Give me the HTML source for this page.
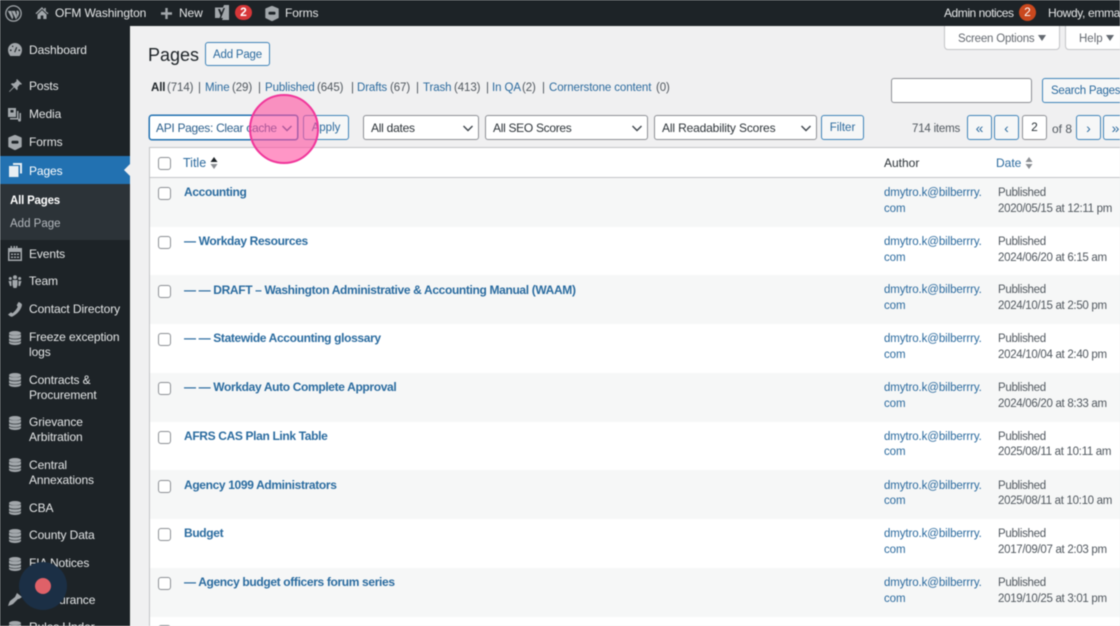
<!DOCTYPE html>
<html lang="en"><head><meta charset="utf-8"><title>Pages</title>
<style>
html,body{margin:0;padding:0;width:1120px;height:626px;overflow:hidden;background:#f0f0f1}
body{position:relative;font-family:"Liberation Sans",sans-serif;font-size:12px;color:#3c434a}
#w{position:absolute;left:0;top:0;width:1120px;height:626px;overflow:hidden;filter:blur(.4px)}
.a,.t,.b,svg.i{position:absolute}
.t{white-space:nowrap;line-height:16px}
.s{color:#e4e6e7;left:29px;letter-spacing:-.1px}
.tb{color:#e4e6e7;letter-spacing:-.12px}
.l{color:#2b6a9e}
.ti{color:#2a6b9f;font-weight:700;left:184px;letter-spacing:-.35px}
.g{color:#50575e}
.e{color:#2b6a9e;left:884px;font-size:11.5px;letter-spacing:-.1px;margin-top:1px}
.p{color:#50575e;left:998px;font-size:11.5px;letter-spacing:-.3px;margin-top:1px}
.v{top:80px;font-size:11.5px;letter-spacing:-.1px;color:#50575e}
.b{box-sizing:border-box;border:1px solid #3e83b8;border-radius:3px;background:#f6f7f7;color:#2b6a9e;text-align:center;white-space:nowrap;font-size:11.5px}
.sel{box-sizing:border-box;position:absolute;height:25px;top:115px;border:1px solid #8c8f94;border-radius:3px;background:#fff;color:#2c3338;line-height:24px;padding-left:7px;white-space:nowrap;letter-spacing:-.25px}
.ck{position:absolute;left:158px;width:13px;height:13px;box-sizing:border-box;border:1px solid #8c8f94;border-radius:3px;background:#fff}
.r{position:absolute;left:150px;width:970px;height:49px;background:#f6f7f7}
.pg{top:115px;width:25px;height:25px;line-height:24px;font-size:14px}
.tri{position:absolute;top:35px;width:0;height:0;border-left:4.5px solid transparent;border-right:4.5px solid transparent;border-top:6px solid #646970}
svg.i{fill:#a2a7ab}
</style></head><body><div id="w">
<svg width="0" height="0" style="position:absolute"><defs>
<g id="db"><ellipse cx="6" cy="2.200" rx="6" ry="2.200"/><path d="M0 3.400c1.500 1.500 10.500 1.500 12 0v2.800c-1 2-11 2-12 0zM0 7.200c1.500 1.500 10.500 1.500 12 0v2.400c-1 2-11 2-12 0zM0 10.500c1.500 1.500 10.500 1.500 12 0v1.500c-1 2.700-11 2.700-12 0z"/></g>
<g id="fm"><path d="M7 .5 13 3v8.500L7 14.500 1 11.500V3z" stroke="#a2a7ab" stroke-width="1.400" stroke-linejoin="round"/><rect x="3.500" y="5.800" width="7" height="2.800" rx="1" fill="#1d2327"/></g>
</defs></svg>

<div class="a" style="left:0;top:0;width:1120px;height:26px;background:#1d2327"></div>
<div class="a" style="left:0;top:26px;width:130px;height:600px;background:#1d2327"></div>

<!-- admin bar -->
<svg class="i" style="left:5px;top:5px" width="17" height="17" viewBox="0 0 16 16"><circle cx="8" cy="8" r="7.200" fill="none" stroke="#a2a7ab" stroke-width="1.200"/><path d="M2.600 5.500h3.200l2 6-.9 2.200zM6.100 5.500h3.300l2 6-1 2.200zM11 5.200c1.600-.3 2.600 1.600 2.100 3.400l-1.300 3.300-.9-2.800c.5-1 .4-2-.2-2.600z"/></svg>
<svg class="i" style="left:35px;top:6px" width="14" height="14" viewBox="0 0 14 14"><path d="M7 1 0.500 7.300l.9.9L7 3l5.600 5.200.9-.9L10.800 5.300V2H9.200v1.800zM2.500 8.500V13h3.200V9.500h2.600V13h3.200V8.500L7 4.300z"/></svg>
<span class="t tb" style="left:55px;top:5px">OFM Washington</span>
<svg class="i" style="left:161px;top:8px" width="11" height="11" viewBox="0 0 11 11"><path d="M4.300 0h2.400v4.300H11v2.400H6.700V11H4.300V6.700H0V4.300h4.300z"/></svg>
<span class="t tb" style="left:179px;top:5px">New</span>
<svg class="i" style="left:214px;top:4px" width="15" height="17" viewBox="0 0 15 17"><path d="M1 3.500h8l1-2.500H15v15H8l1-2H1z" fill="#a2a7ab"/><path d="M4 5h2l1.500 3.500L9.500 4 11 4 7 14H5.500l1-2.500z" fill="#1d2327"/></svg>
<span class="a" style="left:235px;top:5px;width:17px;height:15px;border-radius:8px;background:#d63638;color:#fff;text-align:center;line-height:15px;font-size:12px;font-weight:700">2</span>
<svg class="i" style="left:265px;top:6px" width="14" height="15" viewBox="0 0 14 15"><use href="#fm"/></svg>
<span class="t tb" style="left:285px;top:5px">Forms</span>
<span class="t tb" style="left:944px;top:5px;letter-spacing:-.45px">Admin notices</span>
<span class="a" style="left:1019px;top:4px;width:17px;height:17px;border-radius:50%;background:#c9481e;color:#fff;text-align:center;line-height:16px;font-size:12px">2</span>
<span class="t tb" style="left:1048px;top:5px;letter-spacing:-.35px">Howdy, emma</span>

<!-- sidebar -->
<div class="a" style="left:0;top:156px;width:130px;height:28px;background:#2271b1"></div>
<div class="a" style="left:124px;top:164px;border:6px solid transparent;border-right-color:#f0f0f1;border-left:0"></div>
<div class="a" style="left:0;top:184px;width:130px;height:56px;background:#2c3338"></div>

<svg class="i" style="left:8px;top:43px" width="14" height="13" viewBox="0 0 14 13"><path d="M7 0a7 7 0 0 0-7 7c0 2.300.9 4.300 2.300 6h9.400C13.100 11.300 14 9.300 14 7a7 7 0 0 0-7-7zM6.200 9l2-5 1 .4-2 5zM2 6.500h1.500V8H2zM10.500 6.500H12V8h-1.500zM4 2.700h1.300V4H4z" fill-rule="evenodd"/></svg>
<span class="t s" style="top:42px">Dashboard</span>
<svg class="i" style="left:8px;top:79px" width="14" height="14" viewBox="0 0 14 14"><path d="M9 0l5 5-1.200.8-.8-.5L9.500 8.200c.5 1.300.2 2.300-.5 3L6.200 8.400 1.500 13l-.5-.5 4.600-4.700L2.800 5c.7-.7 1.700-1 3-.5L8.700 2l-.5-.8z"/></svg>
<span class="t s" style="top:78px">Posts</span>
<svg class="i" style="left:7px;top:107px" width="15" height="15" viewBox="0 0 15 15"><path d="M1 1h8v9H1zM3.500 3v2.500H6.500V3z" fill-rule="evenodd"/><path d="M3 11h7V4h1.500v8.500H3zM12.500 6H14v7a1.500 1.500 0 1 1-1.500-1.400z"/></svg>
<span class="t s" style="top:106px">Media</span>
<svg class="i" style="left:8px;top:135px" width="14" height="15" viewBox="0 0 14 15"><use href="#fm"/></svg>
<span class="t s" style="top:134px">Forms</span>
<svg class="i" style="left:9px;top:163px;fill:#e8eef3" width="13" height="14" viewBox="0 0 13 14"><path d="M4 0h9v10.500h-2V2H4zM0 3h9.500v11H0z"/></svg>
<span class="t" style="left:29px;top:163px;color:#fff;letter-spacing:-.1px">Pages</span>
<span class="t" style="left:10px;top:193px;color:#fff;font-weight:700;font-size:11.5px;letter-spacing:-.2px">All Pages</span>
<span class="t" style="left:10px;top:216px;color:#b4b9be;font-size:11.5px">Add Page</span>

<svg class="i" style="left:8px;top:246px" width="14" height="15" viewBox="0 0 14 15"><path d="M0 2h2.500V0h1.500v2h1.500V0h1.500v2h1V0h1.500v2H14v13H0zM1.500 6v7.500h11V6zM3 7.500h2v1.500H3zm3 0h2v1.500H6zm3 0h2v1.500H9zM3 10.500h2V12H3zm3 0h2V12H6zm3 0h2V12H9z" fill-rule="evenodd"/></svg>
<span class="t s" style="top:246px">Events</span>
<svg class="i" style="left:8px;top:275px" width="14" height="13" viewBox="0 0 14 13"><circle cx="7" cy="2.200" r="2"/><circle cx="2.300" cy="3.500" r="1.500"/><circle cx="11.700" cy="3.500" r="1.500"/><path d="M4.500 5h5v5l-1 3h-3l-1-3zM.5 6h3v5H2zM10.500 6h3L12 11h-1.500z"/></svg>
<span class="t s" style="top:273px">Team</span>
<svg class="i" style="left:7px;top:302px" width="16" height="15" viewBox="0 0 16 15"><path d="M11.500 0c1.500.3 3 1.500 3.500 2.500C14.800 7 10 12.500 5 14.800c-1.300 0-2.800-1-4-2.300l3-2.300 1.400 1c2-1.300 4.200-4 5.300-6.500l-1-1.400z"/></svg>
<span class="t s" style="top:301px">Contact Directory</span>

<svg class="i" style="left:9px;top:331px" width="12" height="14" viewBox="0 0 12 14"><use href="#db"/></svg>
<span class="t s" style="top:329px">Freeze exception</span><span class="t s" style="top:344px">logs</span>
<svg class="i" style="left:9px;top:373px" width="12" height="14" viewBox="0 0 12 14"><use href="#db"/></svg>
<span class="t s" style="top:372px">Contracts &amp;</span><span class="t s" style="top:387px">Procurement</span>
<svg class="i" style="left:9px;top:416px" width="12" height="14" viewBox="0 0 12 14"><use href="#db"/></svg>
<span class="t s" style="top:414px">Grievance</span><span class="t s" style="top:429px">Arbitration</span>
<svg class="i" style="left:9px;top:458px" width="12" height="14" viewBox="0 0 12 14"><use href="#db"/></svg>
<span class="t s" style="top:457px">Central</span><span class="t s" style="top:472px">Annexations</span>
<svg class="i" style="left:9px;top:501px" width="12" height="14" viewBox="0 0 12 14"><use href="#db"/></svg>
<span class="t s" style="top:500px">CBA</span>
<svg class="i" style="left:9px;top:529px" width="12" height="14" viewBox="0 0 12 14"><use href="#db"/></svg>
<span class="t s" style="top:527px">County Data</span>
<svg class="i" style="left:9px;top:557px" width="12" height="14" viewBox="0 0 12 14"><use href="#db"/></svg>
<span class="t s" style="top:555px">FIA Notices</span>
<svg class="i" style="left:7px;top:593px" width="15" height="13" viewBox="0 0 15 13"><path d="M10 0l5 4-3 2-1 0-5 5-2 1-3 1 1-3 1-2 5-4z"/></svg>
<span class="t s" style="top:592px">Reinsurance</span>
<svg class="i" style="left:9px;top:621px" width="12" height="14" viewBox="0 0 12 14"><use href="#db"/></svg>
<span class="t s" style="top:619px">Rules Under</span>
<div class="a" style="left:19px;top:562px;width:48px;height:48px;border-radius:50%;background:#1b2f45"></div>
<div class="a" style="left:35px;top:578px;width:16px;height:16px;border-radius:50%;background:#df6168"></div>

<!-- header -->
<span class="t" style="left:148px;top:43px;font-size:18px;line-height:24px;color:#1d2327">Pages</span>
<div class="b" style="left:205px;top:42px;width:65px;height:24px;line-height:24px;letter-spacing:-.2px">Add Page</div>
<div class="a" style="left:944px;top:26px;width:116px;height:24px;box-sizing:border-box;background:#fff;border:1px solid #c3c4c7;border-top:0;border-radius:0 0 4px 4px"></div>
<span class="t" style="left:958px;top:31px;color:#646970;font-size:11.5px;letter-spacing:-.2px">Screen Options</span>
<div class="tri" style="left:1038px"></div>
<div class="a" style="left:1065px;top:26px;width:60px;height:24px;box-sizing:border-box;background:#fff;border:1px solid #c3c4c7;border-top:0;border-radius:0 0 4px 4px"></div>
<span class="t" style="left:1079px;top:31px;color:#646970;font-size:11.5px">Help</span>
<div class="tri" style="left:1106px"></div>

<b class="t v" style="left:151px;color:#1d2327">All</b><span class="t v" style="left:167px">(714)</span><span class="t v" style="left:198px">|</span>
<span class="t v" style="left:205px;color:#2b6a9e">Mine</span><span class="t v" style="left:232px">(29)</span><span class="t v" style="left:258px">|</span>
<span class="t v" style="left:265px;color:#2b6a9e">Published</span><span class="t v" style="left:317px">(645)</span><span class="t v" style="left:351px">|</span>
<span class="t v" style="left:357px;color:#2b6a9e">Drafts</span><span class="t v" style="left:390px">(67)</span><span class="t v" style="left:416px">|</span>
<span class="t v" style="left:423px;color:#2b6a9e">Trash</span><span class="t v" style="left:454px">(413)</span><span class="t v" style="left:486px">|</span>
<span class="t v" style="left:492px;color:#2b6a9e">In QA</span><span class="t v" style="left:522px">(2)</span><span class="t v" style="left:542px">|</span>
<span class="t v" style="left:549px;color:#2b6a9e">Cornerstone content</span><span class="t v" style="left:656px">(0)</span>

<div class="a" style="left:891px;top:78px;width:141px;height:25px;box-sizing:border-box;background:#fff;border:1px solid #8c8f94;border-radius:3px"></div>
<div class="b" style="left:1042px;top:78px;width:90px;height:25px;line-height:25px;text-align:left;padding-left:8px;letter-spacing:-.25px">Search Pages</div>

<!-- filters -->
<div class="sel" style="left:149px;width:149px;border-color:#2271b1;box-shadow:0 0 0 .5px #2271b1"></div>
<div class="b" style="left:303px;top:115px;width:46px;height:25px;line-height:25px">Apply</div>
<div class="sel" style="left:363px;width:116px">All dates</div>
<div class="sel" style="left:485px;width:163px;letter-spacing:-.3px">All SEO Scores</div>
<div class="sel" style="left:654px;width:163px;letter-spacing:-.15px">All Readability Scores</div>
<div class="b" style="left:821px;top:115px;width:43px;height:25px;line-height:25px">Filter</div>
<svg class="a" style="left:0;top:0" width="1120" height="150" fill="none" stroke="#3c434a" stroke-width="1.400"><path d="M463.500 126l4.500 4.500 4.500-4.500M632.500 126l4.500 4.500 4.500-4.500M801.500 126l4.500 4.500 4.500-4.500"/></svg>

<span class="t g" style="left:912px;top:121px;font-size:11.5px;letter-spacing:-.2px">714 items</span>
<div class="b pg" style="left:967px">«</div>
<div class="b pg" style="left:994px">‹</div>
<div class="a" style="left:1022px;top:115px;width:25px;height:25px;box-sizing:border-box;background:#fff;border:1px solid #8c8f94;border-radius:3px;text-align:center;line-height:23px;color:#2c3338">2</div>
<span class="t g" style="left:1052px;top:121px;font-size:12px">of 8</span>
<div class="b pg" style="left:1076px">›</div>
<div class="b pg" style="left:1103px">»</div>

<!-- table -->
<div class="a" style="left:149px;top:147px;width:980px;height:480px;background:#fff;border:1px solid #c3c4c7;box-sizing:border-box"></div>
<div class="a" style="left:150px;top:177px;width:970px;height:1px;background:#c3c4c7"></div>
<div class="r" style="top:178px"></div>
<div class="r" style="top:275px"></div>
<div class="r" style="top:373px"></div>
<div class="r" style="top:470px"></div>
<div class="r" style="top:568px"></div>

<div class="ck" style="top:157px"></div>
<span class="t l" style="left:183px;top:155px;font-size:12.5px">Title</span>
<svg class="a" style="left:210px;top:157px" width="8" height="13"><path d="M4 0l3.500 5h-7z" fill="#1d2327"/><path d="M4 12l3.500-5h-7z" fill="#8c8f94"/></svg>
<span class="t" style="left:884px;top:155px;color:#2c3338">Author</span>
<span class="t l" style="left:996px;top:155px">Date</span>
<svg class="a" style="left:1025px;top:157px" width="8" height="13"><path d="M4 0l3.500 5h-7zM4 12l3.500-5h-7z" fill="#8c8f94"/></svg>

<div class="ck" style="top:187px"></div><span class="t ti" style="top:184px">Accounting</span>
<span class="t e" style="top:184px">dmytro.k@bilberrry.</span><span class="t e" style="top:200px">com</span>
<span class="t p" style="top:184px">Published</span><span class="t p" style="top:200px">2020/05/15 at 12:11 pm</span>

<div class="ck" style="top:236px"></div><span class="t ti" style="top:233px">— Workday Resources</span>
<span class="t e" style="top:233px">dmytro.k@bilberrry.</span><span class="t e" style="top:249px">com</span>
<span class="t p" style="top:233px">Published</span><span class="t p" style="top:249px">2024/06/20 at 6:15 am</span>

<div class="ck" style="top:285px"></div><span class="t ti" style="top:282px">— — DRAFT – Washington Administrative &amp; Accounting Manual (WAAM)</span>
<span class="t e" style="top:281px">dmytro.k@bilberrry.</span><span class="t e" style="top:297px">com</span>
<span class="t p" style="top:281px">Published</span><span class="t p" style="top:297px">2024/10/15 at 2:50 pm</span>

<div class="ck" style="top:333px"></div><span class="t ti" style="top:330px">— — Statewide Accounting glossary</span>
<span class="t e" style="top:330px">dmytro.k@bilberrry.</span><span class="t e" style="top:346px">com</span>
<span class="t p" style="top:330px">Published</span><span class="t p" style="top:346px">2024/10/04 at 2:40 pm</span>

<div class="ck" style="top:382px"></div><span class="t ti" style="top:379px">— — Workday Auto Complete Approval</span>
<span class="t e" style="top:379px">dmytro.k@bilberrry.</span><span class="t e" style="top:395px">com</span>
<span class="t p" style="top:379px">Published</span><span class="t p" style="top:395px">2024/06/20 at 8:33 am</span>

<div class="ck" style="top:431px"></div><span class="t ti" style="top:428px">AFRS CAS Plan Link Table</span>
<span class="t e" style="top:428px">dmytro.k@bilberrry.</span><span class="t e" style="top:443px">com</span>
<span class="t p" style="top:428px">Published</span><span class="t p" style="top:443px">2025/08/11 at 10:11 am</span>

<div class="ck" style="top:480px"></div><span class="t ti" style="top:477px">Agency 1099 Administrators</span>
<span class="t e" style="top:477px">dmytro.k@bilberrry.</span><span class="t e" style="top:492px">com</span>
<span class="t p" style="top:477px">Published</span><span class="t p" style="top:492px">2025/08/11 at 10:10 am</span>

<div class="ck" style="top:528px"></div><span class="t ti" style="top:525px">Budget</span>
<span class="t e" style="top:525px">dmytro.k@bilberrry.</span><span class="t e" style="top:541px">com</span>
<span class="t p" style="top:525px">Published</span><span class="t p" style="top:541px">2017/09/07 at 2:03 pm</span>

<div class="ck" style="top:577px"></div><span class="t ti" style="top:574px">— Agency budget officers forum series</span>
<span class="t e" style="top:574px">dmytro.k@bilberrry.</span><span class="t e" style="top:590px">com</span>
<span class="t p" style="top:574px">Published</span><span class="t p" style="top:590px">2019/10/25 at 3:01 pm</span>

<div class="ck" style="top:625px"></div>

<!-- highlight -->
<span class="t" style="left:156px;top:120px;color:#2b5f8c;letter-spacing:-.3px">API Pages: Clear cache</span>
<svg class="a" style="left:0;top:0" width="300" height="150" fill="none" stroke="#2b5f8c" stroke-width="1.400"><path d="M282.500 126l4.500 4.500 4.500-4.500"/></svg>
<div class="a" style="left:249px;top:94px;width:70px;height:70px;box-sizing:border-box;border-radius:50%;background:rgba(255,80,160,.6);border:2.5px solid #f0369a"></div>
</div></body></html>
